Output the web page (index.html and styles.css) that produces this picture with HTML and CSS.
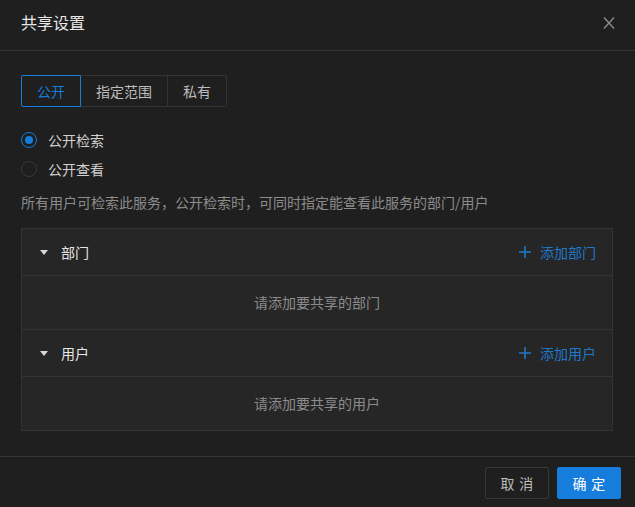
FILE: index.html
```html
<!DOCTYPE html>
<html lang="zh-CN">

<head>
    <meta charset="UTF-8">
    <title>共享设置</title>
    <link rel="stylesheet" href="styles.css">
</head>

<body>
    <div class="modal">
        <div class="modal-header">
            <span class="modal-title">共享设置</span>
            <svg class="close" width="12" height="12" viewBox="0 0 12 12">
                <path d="M1 0.5 L11 11.5 M11 0.5 L1 11.5" stroke="#8f8f8f" stroke-width="1.3" fill="none" />
            </svg>
        </div>

        <div class="modal-body">
            <div class="tabs">
                <div class="tab active">公开</div>
                <div class="tab">指定范围</div>
                <div class="tab">私有</div>
            </div>

            <div class="radios">
                <label class="radio checked"><span class="dot"></span>公开检索</label>
                <label class="radio"><span class="dot"></span>公开查看</label>
            </div>

            <p class="desc">所有用户可检索此服务，公开检索时，可同时指定能查看此服务的部门/用户</p>

            <div class="share-table">
                <div class="group-head">
                    <span class="caret"></span>
                    <span class="group-name">部门</span>
                    <a class="add">
                        <svg width="12" height="12" viewBox="0 0 12 12">
                            <path d="M6 0 V12 M0 6 H12" stroke="#1f78c8" stroke-width="1.6" />
                        </svg>
                        添加部门
                    </a>
                </div>
                <div class="group-body">请添加要共享的部门</div>
                <div class="group-head">
                    <span class="caret"></span>
                    <span class="group-name">用户</span>
                    <a class="add">
                        <svg width="12" height="12" viewBox="0 0 12 12">
                            <path d="M6 0 V12 M0 6 H12" stroke="#1f78c8" stroke-width="1.6" />
                        </svg>
                        添加用户
                    </a>
                </div>
                <div class="group-body">请添加要共享的用户</div>
            </div>
        </div>

        <div class="modal-footer">
            <button class="btn">取消</button>
            <button class="btn primary">确定</button>
        </div>
    </div>
</body>

</html>
```

FILE: styles.css
```css
body {
    margin: 0;
    background: #1f1f1f;
    font-family: "Noto Sans CJK SC", "Noto Sans", sans-serif;
    font-size: 14px;
    color: #d6d6d6;
}

.modal-header {
    height: 50px;
    padding: 0 20px 0 21px;
    display: flex;
    align-items: center;
    justify-content: space-between;
    border-bottom: 1px solid #353535;
}

.modal-title {
    font-size: 16px;
    color: #e8e8e8;
    margin-top: -6px;
}

.close {
    margin-top: -4px;
}

.modal-body {
    padding: 24px 22px 25px 21px;
}

.tabs {
    display: flex;
}

.tab {
    height: 30px;
    line-height: 30px;
    padding: 0 15px;
    border: 1px solid #333;
    color: #bdbdbd;
}

.tab + .tab {
    border-left: none;
}

.tab:first-child {
    border-radius: 2px 0 0 2px;
}

.tab:last-child {
    border-radius: 0 2px 2px 0;
}

.tab.active {
    border-color: #177ddc;
    color: #177ddc;
}

.radios {
    margin-top: 18px;
}

.radio {
    display: flex;
    align-items: center;
    height: 29px;
    color: #d0d0d0;
}

.dot {
    width: 14px;
    height: 14px;
    border: 1px solid #383838;
    border-radius: 50%;
    margin-right: 11px;
    box-sizing: content-box;
    display: flex;
    align-items: center;
    justify-content: center;
}

.radio.checked .dot {
    border-color: #177ddc;
}

.radio.checked .dot::after {
    content: "";
    width: 8px;
    height: 8px;
    border-radius: 50%;
    background: #177ddc;
}

.desc {
    margin: 8px 0 15px;
    line-height: 22px;
    color: #8c8c8c;
}

.share-table {
    background: #262626;
    border: 1px solid #333;
}

.group-head {
    height: 46px;
    display: flex;
    align-items: center;
    padding: 0 16px 0 18px;
    border-bottom: 1px solid #333;
}

.caret {
    width: 0;
    height: 0;
    border-left: 4px solid transparent;
    border-right: 4px solid transparent;
    border-top: 5px solid #d8d8d8;
    margin-right: 13px;
}

.group-name {
    color: #e6e6e6;
    flex: 1;
}

.add {
    display: flex;
    align-items: center;
    gap: 9px;
    color: #1f78c8;
    cursor: pointer;
}

.group-body {
    height: 53px;
    line-height: 53px;
    text-align: center;
    color: #8c8c8c;
    border-bottom: 1px solid #333;
}

.group-body:last-child {
    border-bottom: none;
}

.modal-footer {
    border-top: 1px solid #353535;
    padding: 10px 14px;
    display: flex;
    justify-content: flex-end;
    gap: 8px;
}

.btn {
    width: 64px;
    height: 32px;
    font-family: inherit;
    font-size: 14px;
    letter-spacing: 0.34em;
    padding: 0 0 0 0.34em;
    border: 1px solid #383838;
    border-radius: 2px;
    background: transparent;
    color: #bdbdbd;
    cursor: pointer;
}

.btn.primary {
    background: #177ddc;
    border-color: #177ddc;
    color: #fff;
}
```
